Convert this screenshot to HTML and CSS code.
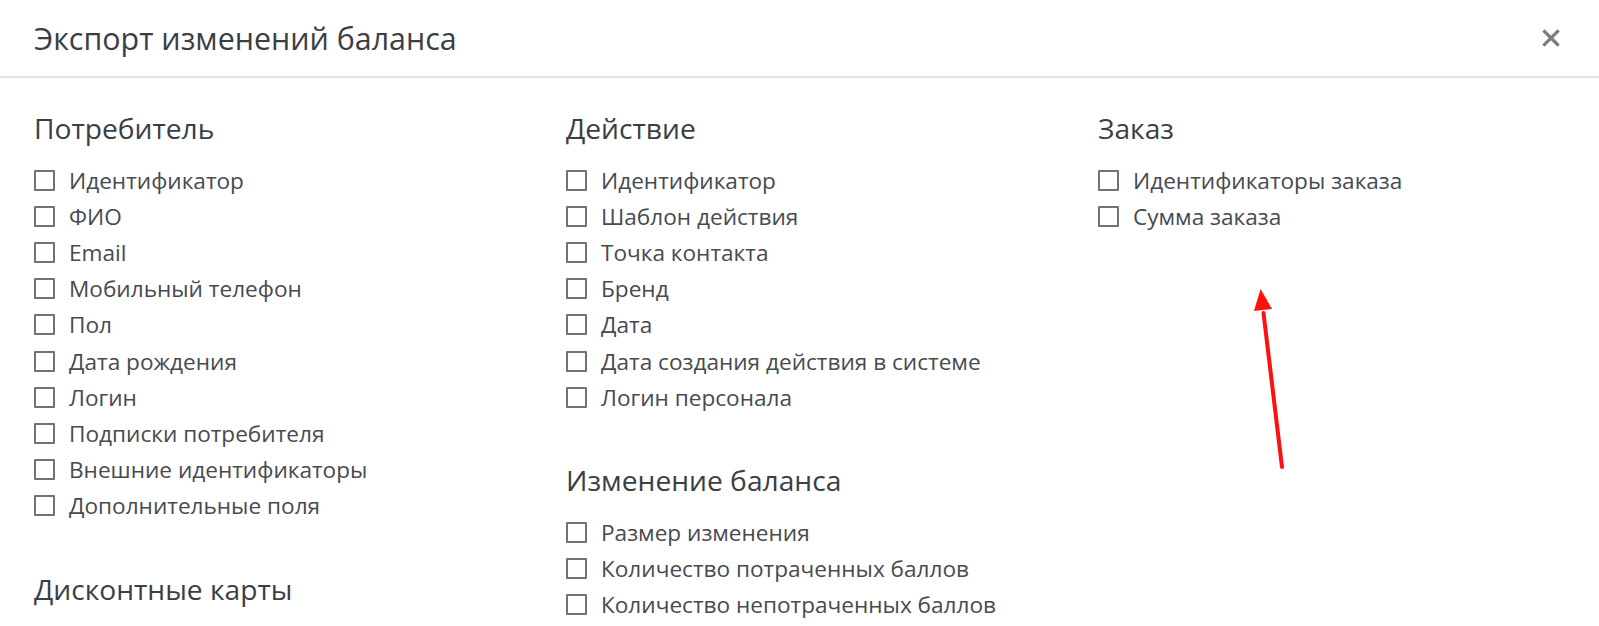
FILE: index.html
```html
<!DOCTYPE html>
<html lang="ru">
<head>
  <meta charset="UTF-8">
  <meta name="viewport" content="width=device-width, initial-scale=1.0">
  <title>Экспорт изменений баланса</title>
  <link rel="stylesheet" href="styles.css">
</head>
<body>
  <div class="modal">
    <div class="modal-header">
      <h1>Экспорт изменений баланса</h1>
      <button class="close-btn" aria-label="Закрыть">
        <svg width="18" height="18" viewBox="0 0 18 18">
          <path d="M2.5 2.5 L15.5 15.5 M15.5 2.5 L2.5 15.5" stroke="#7b7f7b" stroke-width="3.2" stroke-linecap="square"/>
        </svg>
      </button>
    </div>

    <div class="modal-body">
      <div class="column">
        <div class="group">
          <h2>Потребитель</h2>
          <label class="check"><input type="checkbox"><span>Идентификатор</span></label>
          <label class="check"><input type="checkbox"><span>ФИО</span></label>
          <label class="check"><input type="checkbox"><span>Email</span></label>
          <label class="check"><input type="checkbox"><span>Мобильный телефон</span></label>
          <label class="check"><input type="checkbox"><span>Пол</span></label>
          <label class="check"><input type="checkbox"><span>Дата рождения</span></label>
          <label class="check"><input type="checkbox"><span>Логин</span></label>
          <label class="check"><input type="checkbox"><span>Подписки потребителя</span></label>
          <label class="check"><input type="checkbox"><span>Внешние идентификаторы</span></label>
          <label class="check"><input type="checkbox"><span>Дополнительные поля</span></label>
        </div>
        <div class="group">
          <h2>Дисконтные карты</h2>
        </div>
      </div>

      <div class="column">
        <div class="group">
          <h2>Действие</h2>
          <label class="check"><input type="checkbox"><span>Идентификатор</span></label>
          <label class="check"><input type="checkbox"><span>Шаблон действия</span></label>
          <label class="check"><input type="checkbox"><span>Точка контакта</span></label>
          <label class="check"><input type="checkbox"><span>Бренд</span></label>
          <label class="check"><input type="checkbox"><span>Дата</span></label>
          <label class="check"><input type="checkbox"><span>Дата создания действия в системе</span></label>
          <label class="check"><input type="checkbox"><span>Логин персонала</span></label>
        </div>
        <div class="group">
          <h2>Изменение баланса</h2>
          <label class="check"><input type="checkbox"><span>Размер изменения</span></label>
          <label class="check"><input type="checkbox"><span>Количество потраченных баллов</span></label>
          <label class="check"><input type="checkbox"><span>Количество непотраченных баллов</span></label>
        </div>
      </div>

      <div class="column">
        <div class="group">
          <h2>Заказ</h2>
          <label class="check"><input type="checkbox"><span>Идентификаторы заказа</span></label>
          <label class="check"><input type="checkbox"><span>Сумма заказа</span></label>
        </div>
      </div>
    </div>

    <!-- annotation arrow drawn over the screenshot -->
    <svg class="arrow" width="50" height="190" viewBox="0 0 50 190">
      <path d="M38 180 L19.5 26" stroke="#ff1010" stroke-width="4" stroke-linecap="round"/>
      <path d="M16.6 2 L10 24 L28 22 Z" fill="#ff1010"/>
    </svg>
  </div>
</body>
</html>
```

FILE: styles.css
```css
html, body {
  margin: 0;
  height: 100%;
  overflow: hidden;
}

body {
  font-family: "Open Sans", "Noto Sans", sans-serif;
  background: #fff;
  color: #444;
}

.modal {
  position: relative;
  background: #fff;
}

.modal-header {
  display: flex;
  align-items: center;
  justify-content: space-between;
  height: 76px;
  padding: 0 39px 0 34px;
  border-bottom: 2px solid #e3e3e3;
}

.modal-header h1 {
  margin: 0;
  font-size: 30.4px;
  font-weight: 400;
  color: #3b3e44;
}

.close-btn {
  background: none;
  border: none;
  padding: 0;
  cursor: pointer;
  display: flex;
}

.modal-body {
  display: grid;
  grid-template-columns: repeat(3, 1fr);
  column-gap: 65px;
  padding: 35px 34px 0 34px;
}

.group + .group {
  margin-top: 50px;
}

.group h2 {
  margin: 0 0 19px;
  font-size: 28.2px;
  line-height: 30px;
  font-weight: 400;
  color: #3b3e44;
}

.check {
  display: flex;
  align-items: center;
  height: 36.2px;
  font-size: 22.6px;
  color: #474a50;
}

.check input {
  appearance: none;
  margin: 0 14px 0 0;
  width: 21px;
  height: 21px;
  border: 2px solid #727272;
  border-radius: 1px;
  background: #fff;
  flex-shrink: 0;
}

.arrow {
  position: absolute;
  left: 1244px;
  top: 287px;
}
```
